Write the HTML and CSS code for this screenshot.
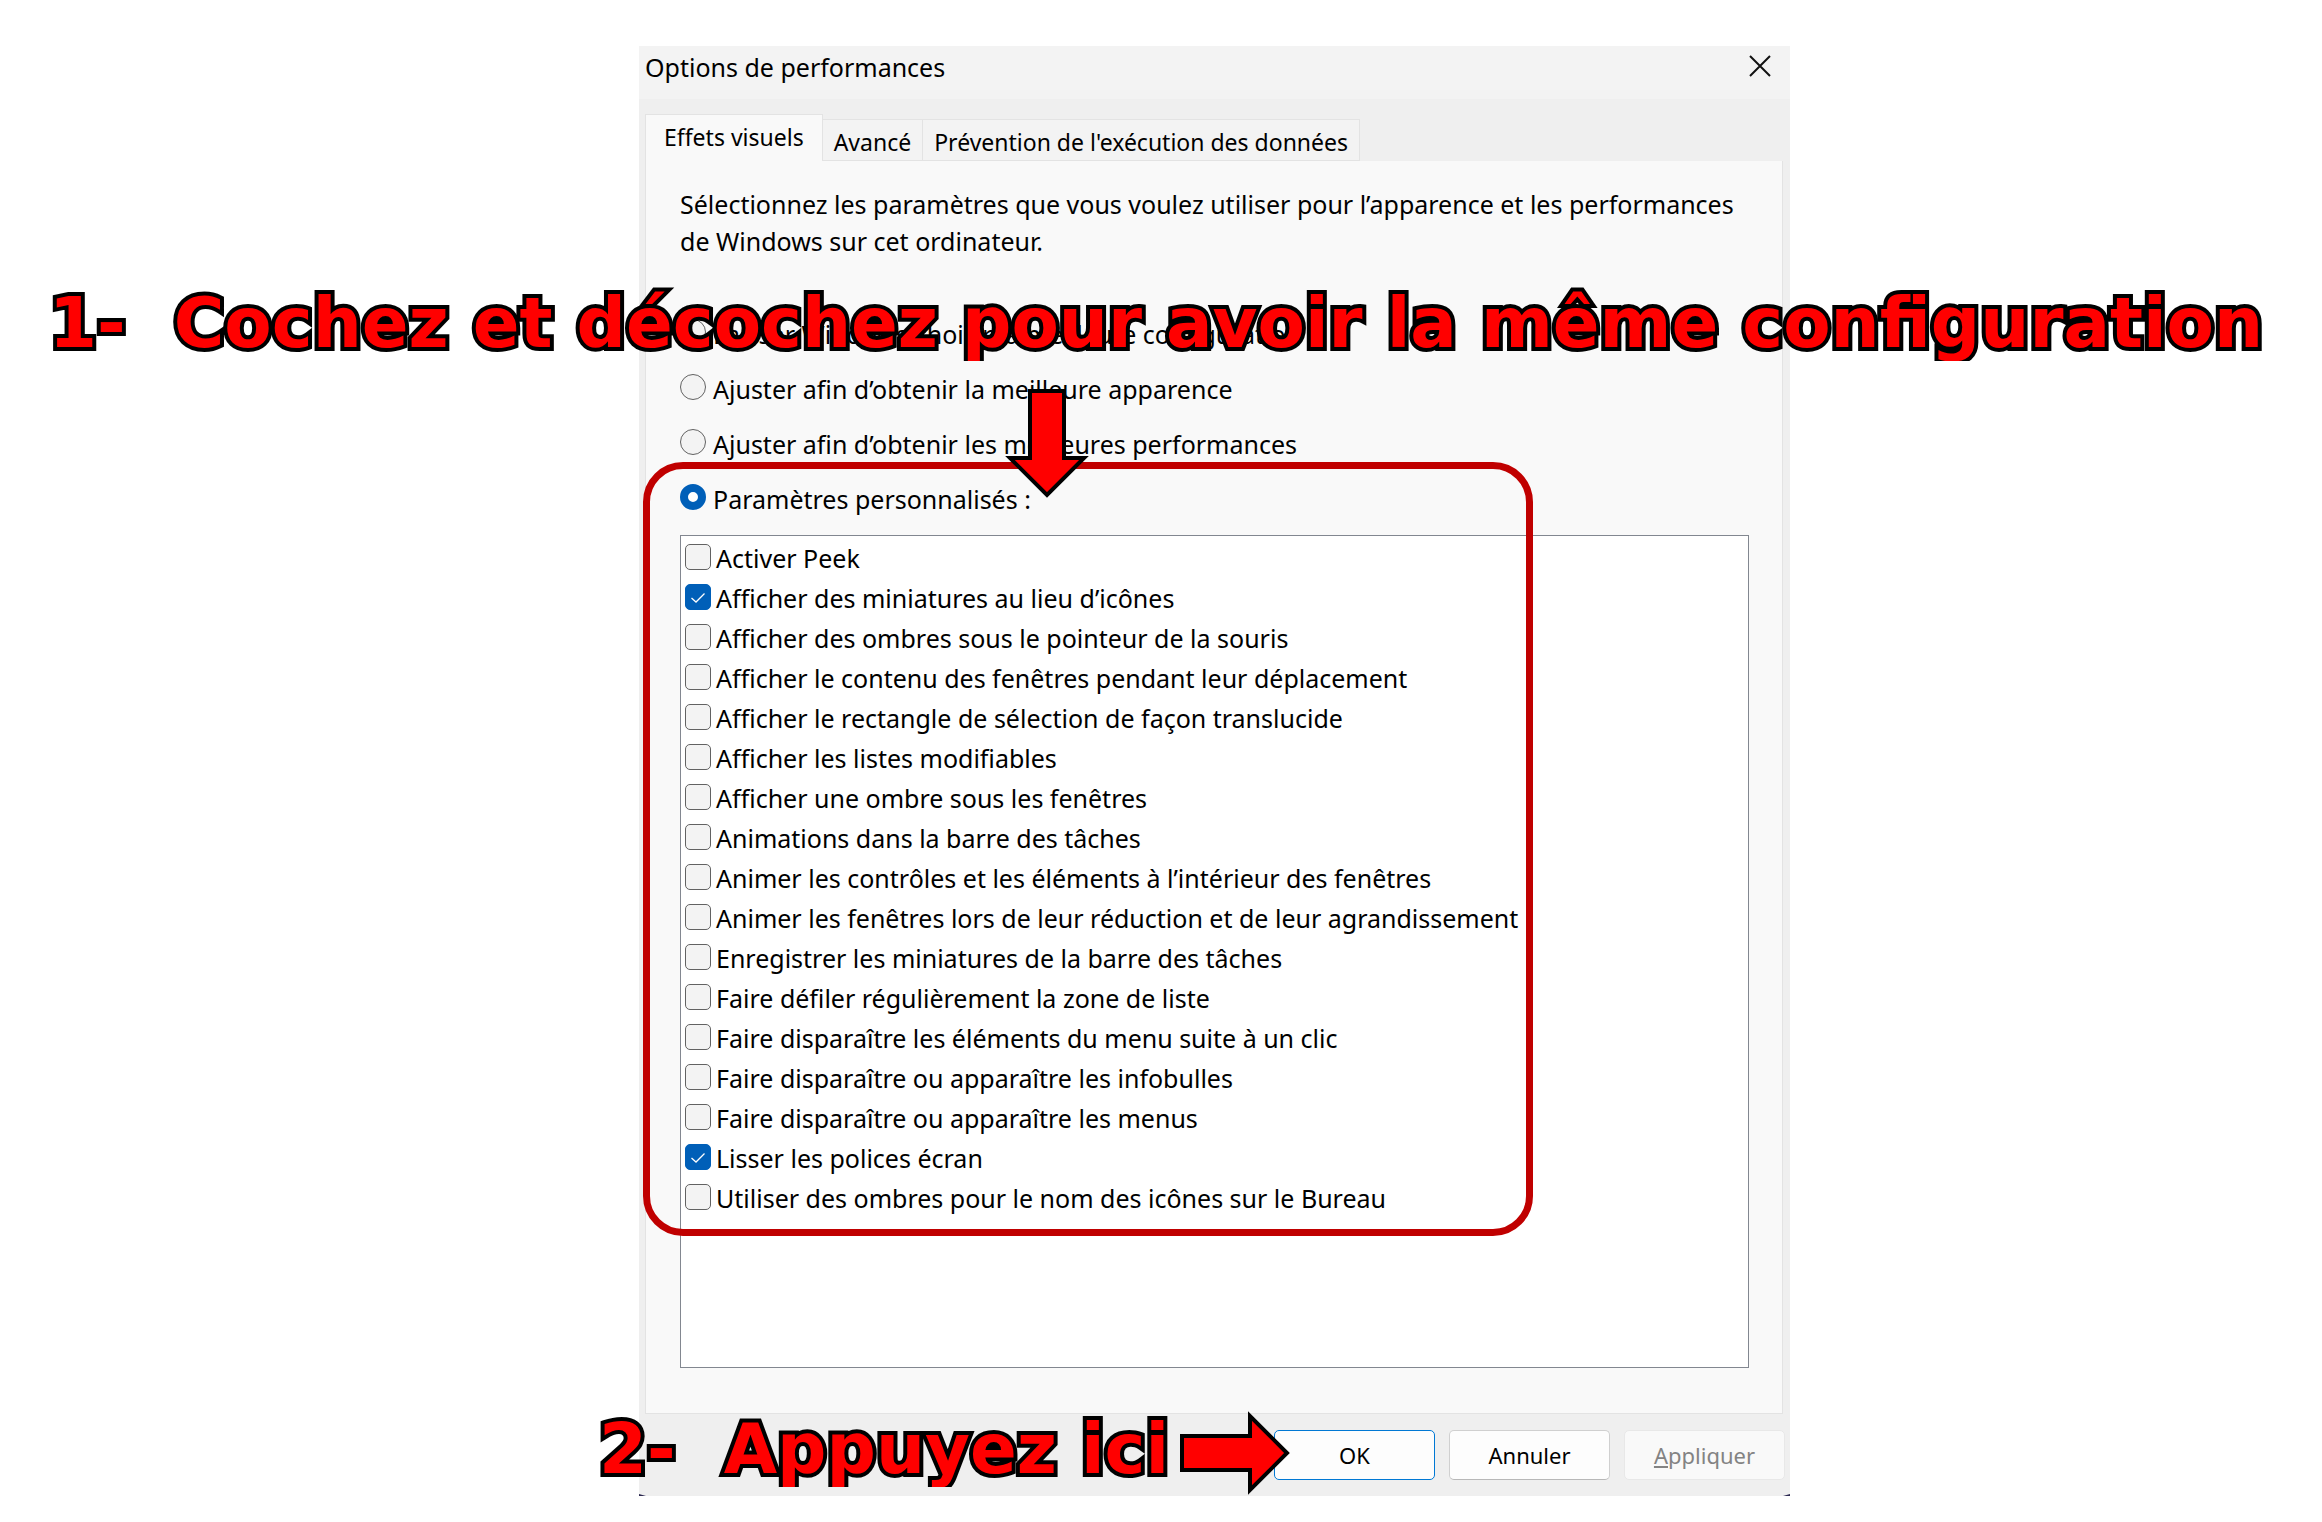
FILE: index.html
```html
<!DOCTYPE html>
<html lang="fr">
<head>
<meta charset="utf-8">
<title>Options de performances</title>
<link rel="stylesheet" href="styles.css">
</head>
<body>
<main class="stage">
  <section class="dialog" aria-labelledby="dialog-title">
    <header class="titlebar">
      <h1 class="title" id="dialog-title">Options de performances</h1>
      <button class="close" type="button" aria-label="Fermer">
        <svg width="22" height="22" viewBox="0 0 22 22" fill="none" stroke="#111" stroke-width="2"><path d="M1 1 21 21M21 1 1 21"/></svg>
      </button>
    </header>
    <div class="tabs" role="tablist">
      <button class="tab tab-active" type="button" role="tab" aria-selected="true">Effets visuels</button>
      <button class="tab" type="button" role="tab">Avancé</button>
      <button class="tab" type="button" role="tab">Prévention de l'exécution des données</button>
    </div>
    <form class="panel">
      <p class="intro">Sélectionnez les paramètres que vous voulez utiliser pour l’apparence et les performances de Windows sur cet ordinateur.</p>
      <div class="radios">
        <label class="option"><input class="radio" type="radio" name="mode"><span>Laisser Windows choisir la meilleure configuration</span></label>
        <label class="option"><input class="radio" type="radio" name="mode"><span>Ajuster afin d’obtenir la meilleure apparence</span></label>
        <label class="option"><input class="radio" type="radio" name="mode"><span>Ajuster afin d’obtenir les meilleures performances</span></label>
        <label class="option"><input class="radio" type="radio" name="mode" checked><span>Paramètres personnalisés :</span></label>
      </div>
      <div class="list">
        <label class="item"><input class="check" type="checkbox"><span>Activer Peek</span></label>
        <label class="item"><input class="check" type="checkbox" checked><span>Afficher des miniatures au lieu d’icônes</span></label>
        <label class="item"><input class="check" type="checkbox"><span>Afficher des ombres sous le pointeur de la souris</span></label>
        <label class="item"><input class="check" type="checkbox"><span>Afficher le contenu des fenêtres pendant leur déplacement</span></label>
        <label class="item"><input class="check" type="checkbox"><span>Afficher le rectangle de sélection de façon translucide</span></label>
        <label class="item"><input class="check" type="checkbox"><span>Afficher les listes modifiables</span></label>
        <label class="item"><input class="check" type="checkbox"><span>Afficher une ombre sous les fenêtres</span></label>
        <label class="item"><input class="check" type="checkbox"><span>Animations dans la barre des tâches</span></label>
        <label class="item"><input class="check" type="checkbox"><span>Animer les contrôles et les éléments à l’intérieur des fenêtres</span></label>
        <label class="item"><input class="check" type="checkbox"><span>Animer les fenêtres lors de leur réduction et de leur agrandissement</span></label>
        <label class="item"><input class="check" type="checkbox"><span>Enregistrer les miniatures de la barre des tâches</span></label>
        <label class="item"><input class="check" type="checkbox"><span>Faire défiler régulièrement la zone de liste</span></label>
        <label class="item"><input class="check" type="checkbox"><span>Faire disparaître les éléments du menu suite à un clic</span></label>
        <label class="item"><input class="check" type="checkbox"><span>Faire disparaître ou apparaître les infobulles</span></label>
        <label class="item"><input class="check" type="checkbox"><span>Faire disparaître ou apparaître les menus</span></label>
        <label class="item"><input class="check" type="checkbox" checked><span>Lisser les polices écran</span></label>
        <label class="item"><input class="check" type="checkbox"><span>Utiliser des ombres pour le nom des icônes sur le Bureau</span></label>
      </div>
    </form>
    <footer class="actions">
      <button class="button button-default" type="button">OK</button>
      <button class="button" type="button">Annuler</button>
      <button class="button" type="button" disabled><u>A</u>ppliquer</button>
    </footer>
    <div class="frame"></div>
    <svg class="arrow arrow-down" width="84" height="110" viewBox="0 0 84 110"><path d="M25 2H59V69H79L42 106 5 69H25Z"/></svg>
    <svg class="arrow arrow-right" width="112" height="86" viewBox="0 0 112 86"><path d="M2 26H70V6L107 43 70 80V60H2Z"/></svg>
    <p class="note note-first">1-&nbsp; Cochez et décochez pour avoir la même configuration</p>
    <p class="note note-second">2-&nbsp; Appuyez ici</p>
  </section>
</main>
</body>
</html>
```
FILE: styles.css
```css
* { box-sizing: border-box; }

body {
  margin: 0;
  background: #fff;
  color: #000;
  font-family: "Noto Sans", sans-serif;
  font-size: 25px;
}

button, input { font: inherit; color: inherit; margin: 0; }

.stage {
  display: grid;
  grid-template-columns: 639fr 1151fr 532fr;
  padding: 46px 0 27px;
  overflow: hidden;
}

.dialog {
  grid-column: 2;
  position: relative;
  display: flex;
  flex-direction: column;
  min-width: 0;
  background: #efefef;
}

/* dark desktop showing behind the rounded bottom corners */
.dialog::before,
.dialog::after {
  content: "";
  position: absolute;
  bottom: 0;
  width: 7px;
  height: 2px;
  background: #2b2850;
}
.dialog::before { left: 0; clip-path: polygon(0 0, 100% 100%, 0 100%); }
.dialog::after { right: 0; clip-path: polygon(100% 0, 100% 100%, 0 100%); }

.titlebar {
  display: flex;
  justify-content: space-between;
  align-items: flex-start;
  height: 53px;
  padding: 0 11px 0 6px;
  background: #f3f3f3;
}
.title { margin: 0; font-size: 25px; font-weight: 400; line-height: 42px; }
.close {
  display: flex;
  align-items: center;
  justify-content: center;
  width: 38px;
  height: 40px;
  padding: 0;
  border: 0;
  background: none;
}

.tabs {
  display: flex;
  align-items: flex-end;
  height: 62px;
  padding: 15px 6px 0;
}
.tab {
  height: 42px;
  padding: 3px 11px 0;
  border: 1px solid #e3e3e3;
  border-left: 0;
  background: #f3f3f3;
  font-size: 23px;
  line-height: 36px;
}
.tab-active {
  height: 47px;
  padding: 0 18px 3px;
  border-left: 1px solid #e3e3e3;
  border-bottom: 0;
  background: #f9f9f9;
}

.panel {
  margin: 0 7px 0 6px;
  padding: 25px 33px 45px 34px;
  border: 1px solid #e3e3e3;
  border-top: 0;
  background: #f9f9f9;
}
.intro { margin: 0; line-height: 37px; }

.radios { display: grid; gap: 15px; margin: 52px 0 18px; }
.option { display: flex; align-items: center; gap: 7px; height: 40px; }
.option span, .item span { white-space: nowrap; }
.option span { padding-top: 4px; }
.item span { padding-top: 2px; }

.radio, .check {
  flex: none;
  appearance: none;
  width: 26px;
  height: 26px;
  border: 1px solid #626262;
  background: #f3f3f3;
}
.radio { border-radius: 50%; }
.radio:checked { border: 8px solid #005fb8; background: #fff; }

.list {
  min-height: 833px;
  padding: 1px 4px;
  border: 1px solid #828790;
  background: #fff;
}
.item { display: flex; align-items: center; gap: 5px; height: 40px; }
.check { border-radius: 5px; }
.check:checked {
  border-color: #005fb8;
  background: #005fb8 url("data:image/svg+xml,%3Csvg xmlns='http://www.w3.org/2000/svg' viewBox='0 0 24 24' fill='none' stroke='white' stroke-width='1.3'%3E%3Cpath d='M5.500 13 10 17 18.500 8.500'/%3E%3C/svg%3E") center / 24px 24px no-repeat;
}

.actions {
  display: flex;
  justify-content: flex-end;
  gap: 14px;
  padding: 16px 5px;
}
.button {
  width: 161px;
  height: 50px;
  padding: 0;
  border: 1px solid #d0d0d0;
  border-bottom-color: #b8b8b8;
  border-radius: 5px;
  background: #fdfdfd;
  font-size: 22px;
}
.button-default { border-color: #0078d4; }
.button:disabled { border-color: #e8e8e8; background: #f9f9f9; color: #838383; }

/* annotations drawn over the dialog */
.frame {
  position: absolute;
  left: 4px;
  top: 416px;
  width: 890px;
  height: 774px;
  border: 7px solid #c00000;
  border-radius: 40px;
}
.arrow { position: absolute; fill: #f00; stroke: #000; stroke-width: 4; }
.arrow-down { left: 366px; top: 343px; }
.arrow-right { left: 541px; top: 1364px; }
.note {
  position: absolute;
  margin: 0;
  height: 78px;
  overflow: hidden;
  padding: 0 4px;
  color: #f00;
  font: 700 69px/80px "DejaVu Sans", sans-serif;
  white-space: nowrap;
  paint-order: stroke fill;
  -webkit-text-stroke: 8px #000;
}
.note-first { left: -594px; top: 237px; }
.note-second { left: -44px; top: 1363px; }
```
